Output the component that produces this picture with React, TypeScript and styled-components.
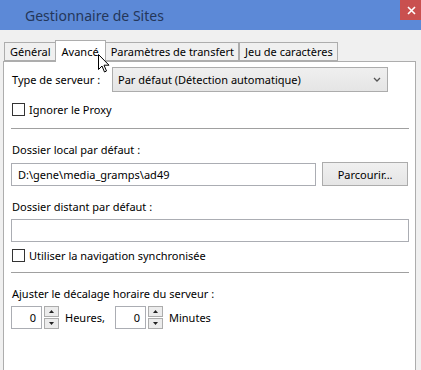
import styled, { createGlobalStyle } from "styled-components";

const Global = createGlobalStyle`
  html, body { margin: 0; padding: 0; background: #f0f0f0; }
  body { font-family: "Noto Sans", "Open Sans", sans-serif; font-size: 11px; line-height: 15px; color: #000; }
`;

export default function App() {
  return (
    <Window>
      <Global />
      <TitleBar>
        <Title>Gestionnaire de Sites</Title>
        <CloseButton>
          <svg width="9" height="9" viewBox="0 0 9 9">
            <path d="M1 1 L8 8 M8 1 L1 8" stroke="#fff" strokeWidth="1.6" />
          </svg>
        </CloseButton>
      </TitleBar>

      <Body>
        <Tabs>
          <Tab>Général</Tab>
          <Tab $active>Avancé</Tab>
          <Tab>Paramètres de transfert</Tab>
          <Tab>Jeu de caractères</Tab>
        </Tabs>
        <Panel>
          <Row>
            <Label>Type de serveur :</Label>
            <Select>
              <span>Par défaut (Détection automatique)</span>
              <svg width="8" height="6" viewBox="0 0 8 6">
                <path d="M1 1 L4 4 L7 1" stroke="#555" strokeWidth="1.3" fill="none" />
              </svg>
            </Select>
          </Row>
          <Check $top={11}>
            <Box />
            Ignorer le Proxy
          </Check>
          <Separator $top={12} />

          <Caption $top={13}>Dossier local par défaut :</Caption>
          <Row>
            <TextInput $grow>D:\gene\media_gramps\ad49</TextInput>
            <Button>Parcourir...</Button>
          </Row>

          <Caption $top={13}>Dossier distant par défaut :</Caption>
          <TextInput />
          <Check $top={7}>
            <Box />
            Utiliser la navigation synchronisée
          </Check>
          <Separator $top={10} />

          <Caption $top={13}>Ajuster le décalage horaire du serveur :</Caption>
          <Row $gap={0}>
            <Spin value="0" />
            <Unit>Heures,</Unit>
            <Spin value="0" />
            <Unit>Minutes</Unit>
          </Row>
        </Panel>
      </Body>

      <Cursor viewBox="0 0 12 19" width="12" height="19">
        <path
          d="M0.5 0.5 L0.5 15.5 L4 12 L6.5 18 L8.5 17 L6 11.2 L11 11.2 Z"
          fill="#fff"
          stroke="#000"
          strokeWidth="1"
        />
      </Cursor>
    </Window>
  );
}

function Spin({ value }: { value: string }) {
  return (
    <SpinWrap>
      <SpinBox>{value}</SpinBox>
      <Arrows>
        <ArrowBtn>
          <svg width="5" height="3" viewBox="0 0 5 3"><path d="M0 3 L2.5 0 L5 3 Z" fill="#222" /></svg>
        </ArrowBtn>
        <ArrowBtn>
          <svg width="5" height="3" viewBox="0 0 5 3"><path d="M0 0 L2.5 3 L5 0 Z" fill="#222" /></svg>
        </ArrowBtn>
      </Arrows>
    </SpinWrap>
  );
}

const Window = styled.div`
  position: relative;
  width: 421px;
  height: 370px;
  overflow: hidden;
  display: flex;
  flex-direction: column;
`;

const TitleBar = styled.div`
  height: 30px;
  background: #5c89d7;
  display: flex;
  align-items: flex-start;
  justify-content: space-between;
`;

const Title = styled.div`
  padding: 7px 0 0 25px;
  font-size: 14px;
  line-height: 18px;
  color: #24375a;
`;

const CloseButton = styled.div`
  width: 22px;
  height: 20px;
  margin-right: -1px;
  background: #c9504f;
  display: flex;
  align-items: center;
  justify-content: center;
`;

const Body = styled.div`
  flex: 1;
  display: flex;
  flex-direction: column;
  padding: 11px 5px 0 3px;
`;

const Tabs = styled.div`
  display: flex;
  align-items: flex-end;
  padding-left: 1px;
  height: 20px;
  position: relative;
  z-index: 1;
`;

const Tab = styled.div<{ $active?: boolean }>`
  height: ${(p) => (p.$active ? 21 : 17)}px;
  margin-bottom: ${(p) => (p.$active ? -1 : 0)}px;
  padding: 0 ${(p) => (p.$active ? 6 : 4)}px 0 ${(p) => (p.$active ? 6 : 5)}px;
  margin-left: ${(p) => (p.$active ? -1 : 0)}px;
  margin-right: ${(p) => (p.$active ? -1 : 0)}px;
  border: 1px solid #adadad;
  border-bottom: ${(p) => (p.$active ? "none" : "1px solid #adadad")};
  background: ${(p) => (p.$active ? "#fff" : "#f0f0f0")};
  display: flex;
  align-items: center;
  white-space: nowrap;
  & + & { border-left: ${(p) => (p.$active ? "1px solid #adadad" : "none")}; }
`;

const Panel = styled.div`
  flex: 1;
  background: #fff;
  border: 1px solid #adadad;
  border-bottom: none;
  padding: 5px 7px 0 7px;
  display: flex;
  flex-direction: column;
`;

const Row = styled.div<{ $gap?: number }>`
  display: flex;
  align-items: center;
  gap: ${(p) => p.$gap ?? 6}px;
`;

const Label = styled.div`
  width: 94px;
  padding-left: 1px;
  white-space: nowrap;
`;

const Select = styled.div`
  width: 276px;
  height: 25px;
  box-sizing: border-box;
  border: 1px solid #acacac;
  background: linear-gradient(#efefef, #e5e5e5);
  display: flex;
  align-items: center;
  justify-content: space-between;
  padding: 0 6px 0 5px;
`;

const Check = styled.div<{ $top?: number }>`
  display: flex;
  align-items: center;
  gap: 4px;
  margin-top: ${(p) => p.$top ?? 10}px;
  height: 13px;
  white-space: nowrap;
`;

const Box = styled.div`
  width: 13px;
  height: 13px;
  box-sizing: border-box;
  border: 1px solid #333;
  background: #fff;
  margin-left: 1px;
`;

const Separator = styled.div<{ $top?: number }>`
  height: 1px;
  background: #a0a0a0;
  margin-top: ${(p) => p.$top ?? 12}px;
  width: 398px;
`;

const Caption = styled.div<{ $top?: number }>`
  margin-top: ${(p) => p.$top ?? 11}px;
  margin-bottom: 5px;
  padding-left: 1px;
  white-space: nowrap;
`;

const TextInput = styled.div<{ $grow?: boolean }>`
  box-sizing: border-box;
  height: 23px;
  width: ${(p) => (p.$grow ? "306px" : "398px")};
  border: 1px solid #abadb3;
  background: #fff;
  padding: 0 6px;
  display: flex;
  align-items: center;
  white-space: nowrap;
`;

const Button = styled.div`
  box-sizing: border-box;
  width: 86px;
  height: 24px;
  border: 1px solid #acacac;
  background: linear-gradient(#f0f0f0, #e5e5e5);
  display: flex;
  align-items: center;
  justify-content: center;
`;

const SpinWrap = styled.div`
  display: flex;
  align-items: center;
  gap: 2px;
`;

const SpinBox = styled.div`
  box-sizing: border-box;
  width: 31px;
  height: 23px;
  border: 1px solid #abadb3;
  background: #fff;
  display: flex;
  align-items: center;
  justify-content: flex-end;
  padding-right: 5px;
`;

const Arrows = styled.div`
  display: flex;
  flex-direction: column;
  gap: 1px;
`;

const ArrowBtn = styled.div`
  box-sizing: border-box;
  width: 15px;
  height: 11px;
  border: 1px solid #acacac;
  background: #ececec;
  display: flex;
  align-items: center;
  justify-content: center;
`;

const Unit = styled.div`
  margin-left: 6px;
  width: 50px;
  &:last-child { width: auto; }
`;

const Cursor = styled.svg`
  position: absolute;
  left: 98px;
  top: 54px;
  z-index: 5;
`;
